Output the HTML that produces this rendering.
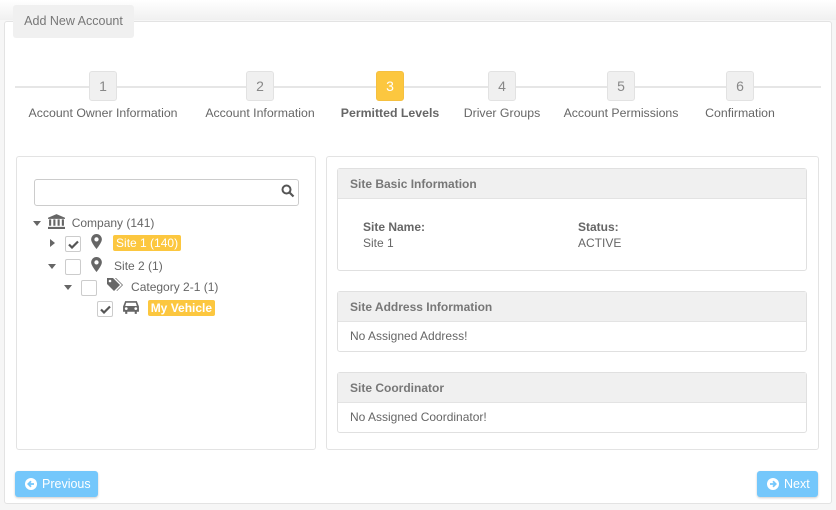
<!DOCTYPE html>
<html><head><style>
*{box-sizing:border-box;margin:0;padding:0}
body{width:836px;height:510px;background:#f6f6f6;font-family:"Liberation Sans",sans-serif;color:#666;font-size:12px;position:relative;overflow:hidden}
.abs{position:absolute}
.card{left:4px;top:21px;width:828px;height:483px;background:#fff;border:1px solid #e3e3e3;border-radius:3px}
.tab{left:13px;top:5px;width:121px;height:33px;background:#f0f0f0;border-radius:3px;font-size:12.5px;line-height:33px;text-align:center;color:#777}
.line{left:15px;top:86px;width:806px;height:2px;background:#e6e6e6}
.step{width:28px;height:30px;top:71px;background:#f0f0f0;border:1px solid #e2e2e2;border-radius:3px;text-align:center;line-height:28px;font-size:14px;color:#888}
.step.on{background:#fcc73f;border-color:#f5c040;color:#fff}
.lbl{top:106px;font-size:12.3px;color:#666;white-space:nowrap;transform:translateX(-50%)}
.panel{border:1px solid #e3e3e3;border-radius:3px;background:#fff}
.sec{left:337px;width:470px;border:1px solid #e0e0e0;border-radius:3px;background:#fff}
.sec .h{background:#f0f0f0;height:30px;line-height:30px;padding-left:12px;font-weight:bold;font-size:12px;color:#777;border-bottom:1px solid #e3e3e3}
.sec .b{padding:0 12px;line-height:29px}
.tree{font-size:12px;color:#666;white-space:nowrap}
.cb{display:inline-block;width:16px;height:16px;border:1px solid #ccc;border-radius:2px;background:#fff;vertical-align:middle;position:relative}
.cb svg{position:absolute;left:2px;top:3px}
.hl{background:#fcc73f;color:#fff;border-radius:2px;padding:1px 3px}
.btn{top:471px;height:26px;background:#74c7fb;color:#fff;border-radius:3px;line-height:26px;font-size:12.5px;box-shadow:0 1px 2px rgba(0,0,0,.2);padding-left:10px}
.btn svg{vertical-align:-2px;margin-right:5px}
</style></head><body>
<div class="abs" style="left:0;top:0;width:836px;height:20px;background:linear-gradient(#fff,#f0f0f0)"></div>
<div class="abs card"></div>
<div class="abs tab">Add New Account</div>
<div class="abs line"></div>
<div class="abs step" style="left:89px">1</div>
<div class="abs step" style="left:246px">2</div>
<div class="abs step on" style="left:376px">3</div>
<div class="abs step" style="left:488px">4</div>
<div class="abs step" style="left:607px">5</div>
<div class="abs step" style="left:726px">6</div>
<div class="abs lbl" style="left:103px">Account Owner Information</div>
<div class="abs lbl" style="left:260px">Account Information</div>
<div class="abs lbl" style="left:390px;font-weight:bold">Permitted Levels</div>
<div class="abs lbl" style="left:502px">Driver Groups</div>
<div class="abs lbl" style="left:621px">Account Permissions</div>
<div class="abs lbl" style="left:740px">Confirmation</div>

<div class="abs panel" style="left:16px;top:156px;width:300px;height:294px"></div>
<div class="abs panel" style="left:326px;top:156px;width:493px;height:294px"></div>

<div class="abs" style="left:34px;top:179px;width:265px;height:27px;border:1px solid #ccc;border-radius:3px"></div>
<svg class="abs" style="left:281px;top:184px" width="14" height="14" viewBox="0 0 14 14"><circle cx="5.5" cy="5.5" r="4" fill="none" stroke="#555" stroke-width="2"/><path d="M8.5 8.5L12.5 12.5" stroke="#555" stroke-width="2.2"/></svg>

<div class="abs tree" style="left:33px;top:214px">
<span style="display:inline-block;border:4px solid transparent;border-top:5px solid #666;vertical-align:-3px"></span>
<svg width="17" height="15" viewBox="0 0 16 14" style="vertical-align:-2px;margin-left:4px"><path d="M8 0L16 3.5V4.5H0V3.5Z M1 5h2v6h-2z M5 5h2v6h-2z M9 5h2v6h-2z M13 5h2v6h-2z M0 12h16v2H0z" fill="#666"/></svg>
<span style="margin-left:3px">Company (141)</span></div>

<div class="abs tree" style="left:50px;top:234px">
<span style="display:inline-block;border:4px solid transparent;border-left:5px solid #666;vertical-align:0"></span>
<span class="cb" style="margin-left:3px"><svg width="11" height="9" viewBox="0 0 11 9"><path d="M1 4.5L4 7.5L10 1.5" fill="none" stroke="#555" stroke-width="2.2"/></svg></span>
<svg width="11" height="15" viewBox="0 0 10 14" style="vertical-align:-2px;margin-left:6px"><path d="M5 0A5 5 0 0 1 10 5C10 8 5 14 5 14C5 14 0 8 0 5A5 5 0 0 1 5 0Z" fill="#666"/><circle cx="5" cy="5" r="2" fill="#fff"/></svg>
<span class="hl" style="margin-left:8px">Site 1 (140)</span></div>

<div class="abs tree" style="left:48px;top:257px">
<span style="display:inline-block;border:4px solid transparent;border-top:5px solid #666;vertical-align:-3px"></span>
<span class="cb" style="margin-left:6px"></span>
<svg width="11" height="15" viewBox="0 0 10 14" style="vertical-align:-2px;margin-left:6px"><path d="M5 0A5 5 0 0 1 10 5C10 8 5 14 5 14C5 14 0 8 0 5A5 5 0 0 1 5 0Z" fill="#666"/><circle cx="5" cy="5" r="2" fill="#fff"/></svg>
<span style="margin-left:9px">Site 2 (1)</span></div>

<div class="abs tree" style="left:64px;top:278px">
<span style="display:inline-block;border:4px solid transparent;border-top:5px solid #666;vertical-align:-3px"></span>
<span class="cb" style="margin-left:6px"></span>
<svg width="17" height="14" viewBox="0 0 17 14" style="vertical-align:-1px;margin-left:6px"><path d="M0 0H6L13 7L7 13L0 6Z" fill="#666"/><path d="M8 0H9L16 7L10 13L9.5 12.5L15 7Z" fill="#666"/><circle cx="3" cy="3" r="1.3" fill="#fff"/></svg>
<span style="margin-left:4px">Category 2-1 (1)</span></div>

<div class="abs tree" style="left:97px;top:300px">
<span class="cb"><svg width="11" height="9" viewBox="0 0 11 9"><path d="M1 4.5L4 7.5L10 1.5" fill="none" stroke="#555" stroke-width="2.2"/></svg></span>
<svg width="18" height="14" viewBox="0 0 17 13" style="vertical-align:-2px;margin-left:6px"><path d="M3 1H14L16 6V11H14V13H12V11H5V13H3V11H1V6Z" fill="#666"/><path d="M4 2.5H13L14 5.5H3Z" fill="#fff"/><circle cx="4" cy="8" r="1.3" fill="#fff"/><circle cx="13" cy="8" r="1.3" fill="#fff"/></svg>
<span class="hl" style="margin-left:4px;font-weight:bold">My Vehicle</span></div>

<div class="abs sec" style="top:168px;height:103px"><div class="h">Site Basic Information</div>
<div class="abs" style="left:25px;top:50px;line-height:16px"><b>Site Name:</b><br>Site 1</div>
<div class="abs" style="left:240px;top:50px;line-height:16px"><b>Status:</b><br>ACTIVE</div></div>
<div class="abs sec" style="top:291px;height:61px"><div class="h">Site Address Information</div><div class="b">No Assigned Address!</div></div>
<div class="abs sec" style="top:372px;height:61px"><div class="h">Site Coordinator</div><div class="b">No Assigned Coordinator!</div></div>

<div class="abs btn" style="left:15px;width:83px"><svg width="12" height="12" viewBox="0 0 12 12"><circle cx="6" cy="6" r="6" fill="#fff"/><path d="M9 6H3.5M6 3.3L3.3 6L6 8.7" fill="none" stroke="#74c7fb" stroke-width="1.8"/></svg>Previous</div>
<div class="abs btn" style="left:757px;width:61px"><svg width="12" height="12" viewBox="0 0 12 12"><circle cx="6" cy="6" r="6" fill="#fff"/><path d="M3 6H8.5M6 3.3L8.7 6L6 8.7" fill="none" stroke="#74c7fb" stroke-width="1.8"/></svg>Next</div>
</body></html>
